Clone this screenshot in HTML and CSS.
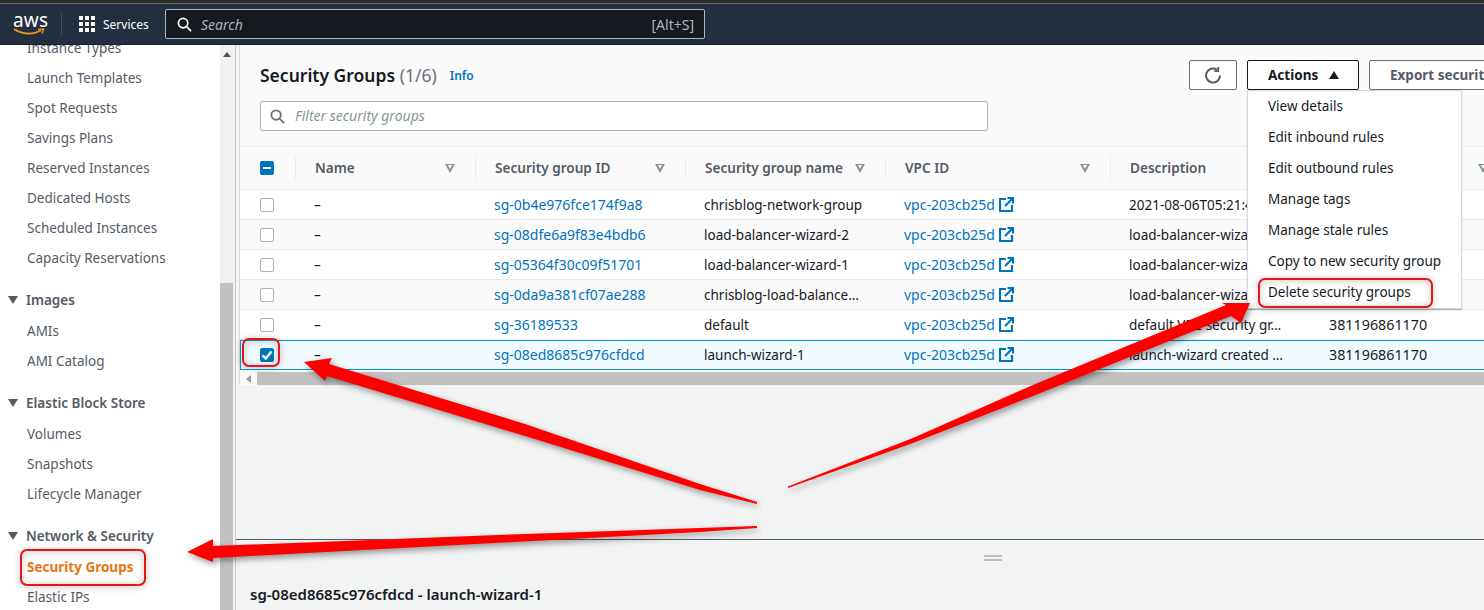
FILE: index.html
```html
<!DOCTYPE html>
<html lang="en">
<head>
  <meta charset="UTF-8" />
  <title>Security Groups</title>
  <link rel="stylesheet" href="styles.css">
</head>
<body>
  <div class="top-strip"></div>
  <header class="navbar">
    <div class="logo">
      <span class="logo-text">aws</span>
      <svg class="logo-smile" width="32" height="8" viewBox="0 0 32 8"><path d="M1 1C9 6.500 20 7 28 2.500" fill="none" stroke="#ec9215" stroke-width="1.800"/><path d="M25 1.500L30.500 1L29 5.500" fill="none" stroke="#ec9215" stroke-width="1.500"/></svg>
    </div>
    <div class="nav-sep"></div>
    <svg class="grid-icon" width="16" height="16" viewBox="0 0 16 16" fill="#fff">
      <rect x="0" y="0" width="4" height="4"/><rect x="6" y="0" width="4" height="4"/><rect x="12" y="0" width="4" height="4"/>
      <rect x="0" y="6" width="4" height="4"/><rect x="6" y="6" width="4" height="4"/><rect x="12" y="6" width="4" height="4"/>
      <rect x="0" y="12" width="4" height="4"/><rect x="6" y="12" width="4" height="4"/><rect x="12" y="12" width="4" height="4"/>
    </svg>
    <span class="services">Services</span>
    <div class="nav-search">
      <svg width="15" height="15" viewBox="0 0 16 16" fill="none" stroke="#fff" stroke-width="1.800"><circle cx="6.500" cy="6.500" r="5"/><path d="M10.500 10.500L15 15"/></svg>
      <span class="nav-search-text">Search</span>
      <span class="nav-search-key">[Alt+S]</span>
    </div>
  </header>

  <div class="layout">
    <aside class="sidebar">
      <ul class="side-list">
        <li>Instance Types</li>
        <li>Launch Templates</li>
        <li>Spot Requests</li>
        <li>Savings Plans</li>
        <li>Reserved Instances</li>
        <li>Dedicated Hosts</li>
        <li>Scheduled Instances</li>
        <li>Capacity Reservations</li>
      </ul>
      <h3 class="side-head">Images</h3>
      <ul class="side-list">
        <li>AMIs</li>
        <li>AMI Catalog</li>
      </ul>
      <h3 class="side-head">Elastic Block Store</h3>
      <ul class="side-list">
        <li>Volumes</li>
        <li>Snapshots</li>
        <li>Lifecycle Manager</li>
      </ul>
      <h3 class="side-head">Network &amp; Security</h3>
      <ul class="side-list">
        <li class="active">Security Groups</li>
        <li>Elastic IPs</li>
      </ul>
    </aside>
    <div class="side-scroll">
      <div class="scroll-up"></div>
      <div class="scroll-thumb"></div>
    </div>

    <main class="content">
      <div class="upper">
        <section class="panel">
          <div class="panel-head">
            <h1 class="panel-title">Security Groups <span class="count">(1/6)</span></h1>
            <a class="info">Info</a>
            <div class="panel-actions">
              <button class="btn btn-icon">
                <svg width="18" height="18" viewBox="0 0 18 18" fill="none" stroke="#545b64" stroke-width="2"><path d="M16 9.500A7 7 0 1 1 13 3.800"/><path d="M14.300 1v4.200H10.200" stroke-width="1.800"/></svg>
              </button>
              <button class="btn btn-dark">Actions <span class="caret"></span></button>
              <button class="btn btn-export">Export security groups to CSV</button>
            </div>
          </div>
          <div class="filter">
            <svg width="15" height="15" viewBox="0 0 16 16" fill="none" stroke="#687078" stroke-width="2"><circle cx="6.500" cy="6.500" r="5"/><path d="M10.500 10.500L15 15"/></svg>
            <span class="filter-text">Filter security groups</span>
          </div>
          <table class="sg-table">
            <colgroup>
              <col class="c-check"><col class="c-name"><col class="c-id"><col class="c-group"><col class="c-vpc"><col class="c-desc"><col class="c-owner">
            </colgroup>
            <thead>
              <tr>
                <th><span class="cbox cbox-mixed"></span></th>
                <th><div class="th-in">Name<i class="sort"></i></div></th>
                <th><div class="th-in">Security group ID<i class="sort"></i></div></th>
                <th><div class="th-in">Security group name<i class="sort"></i></div></th>
                <th><div class="th-in">VPC ID<i class="sort"></i></div></th>
                <th><div class="th-in">Description<i class="sort"></i></div></th>
                <th><div class="th-in">Owner<i class="sort"></i></div></th>
              </tr>
            </thead>
            <tbody>
              <tr>
                <td><span class="cbox"></span></td><td>–</td><td class="link">sg-0b4e976fce174f9a8</td><td>chrisblog-network-group</td>
                <td class="link">vpc-203cb25d <svg class="ext" width="15" height="15" viewBox="0 0 15 15" fill="none" stroke="#0073bb" stroke-width="2.200"><path d="M7 2H1v12h12V8"/><path d="M6 9l7-7M8.500 1H14v5.500"/></svg></td>
                <td>2021-08-06T05:21:46.021Z</td><td class="num">381196861170</td>
              </tr>
              <tr>
                <td><span class="cbox"></span></td><td>–</td><td class="link">sg-08dfe6a9f83e4bdb6</td><td>load-balancer-wizard-2</td>
                <td class="link">vpc-203cb25d <svg class="ext" width="15" height="15" viewBox="0 0 15 15" fill="none" stroke="#0073bb" stroke-width="2.200"><path d="M7 2H1v12h12V8"/><path d="M6 9l7-7M8.500 1H14v5.500"/></svg></td>
                <td>load-balancer-wizard-2 c…</td><td class="num">381196861170</td>
              </tr>
              <tr>
                <td><span class="cbox"></span></td><td>–</td><td class="link">sg-05364f30c09f51701</td><td>load-balancer-wizard-1</td>
                <td class="link">vpc-203cb25d <svg class="ext" width="15" height="15" viewBox="0 0 15 15" fill="none" stroke="#0073bb" stroke-width="2.200"><path d="M7 2H1v12h12V8"/><path d="M6 9l7-7M8.500 1H14v5.500"/></svg></td>
                <td>load-balancer-wizard-1 c…</td><td class="num">381196861170</td>
              </tr>
              <tr>
                <td><span class="cbox"></span></td><td>–</td><td class="link">sg-0da9a381cf07ae288</td><td>chrisblog-load-balance…</td>
                <td class="link">vpc-203cb25d <svg class="ext" width="15" height="15" viewBox="0 0 15 15" fill="none" stroke="#0073bb" stroke-width="2.200"><path d="M7 2H1v12h12V8"/><path d="M6 9l7-7M8.500 1H14v5.500"/></svg></td>
                <td>load-balancer-wizard-1 c…</td><td class="num">381196861170</td>
              </tr>
              <tr>
                <td><span class="cbox"></span></td><td>–</td><td class="link">sg-36189533</td><td>default</td>
                <td class="link">vpc-203cb25d <svg class="ext" width="15" height="15" viewBox="0 0 15 15" fill="none" stroke="#0073bb" stroke-width="2.200"><path d="M7 2H1v12h12V8"/><path d="M6 9l7-7M8.500 1H14v5.500"/></svg></td>
                <td>default VPC security gr…</td><td class="num">381196861170</td>
              </tr>
              <tr class="selected">
                <td><span class="cbox cbox-on"><svg width="14" height="14" viewBox="0 0 14 14" fill="none" stroke="#fff" stroke-width="2.400"><path d="M2.500 7.500L5.800 10.500L11.500 3.500"/></svg></span></td><td>–</td><td class="link">sg-08ed8685c976cfdcd</td><td>launch-wizard-1</td>
                <td class="link">vpc-203cb25d <svg class="ext" width="15" height="15" viewBox="0 0 15 15" fill="none" stroke="#0073bb" stroke-width="2.200"><path d="M7 2H1v12h12V8"/><path d="M6 9l7-7M8.500 1H14v5.500"/></svg></td>
                <td>launch-wizard created …</td><td class="num">381196861170</td>
              </tr>
            </tbody>
          </table>
          <div class="table-scroll">
            <div class="scroll-left"></div>
            <div class="scroll-bar"></div>
          </div>
        </section>
      </div>
      <div class="gap-area"></div>
      <section class="split">
        <div class="split-handle"></div>
        <h2 class="split-title">sg-08ed8685c976cfdcd - launch-wizard-1</h2>
      </section>
    </main>
  </div>

  <ul class="menu">
    <li>View details</li>
    <li>Edit inbound rules</li>
    <li>Edit outbound rules</li>
    <li>Manage tags</li>
    <li>Manage stale rules</li>
    <li>Copy to new security group</li>
    <li>Delete security groups</li>
  </ul>

  <!-- annotations drawn over the screenshot -->
  <svg class="marks" width="1484" height="610" viewBox="0 0 1484 610">
    <g class="arrows">
      <polygon points="304,362 332,358 329,364 525,424 700,484 757,502 757,504 700,490 525,436 327,376 325,381"/>
      <polygon points="1250,303 1222,303 1226,305 1033,385 913,438 788,486.500 788,488 913,443 1033,396 1231,316 1241,323"/>
      <polygon points="187,552 213,539 213,546 485,535.500 700,528 757,526 757,528 700,532 485,543.500 213,558 213,562"/>
    </g>
    <g class="boxes">
      <rect x="1259" y="279" width="173" height="28" rx="6"/>
      <rect x="243" y="339" width="36" height="27" rx="6"/>
      <rect x="21" y="550" width="124" height="35" rx="6"/>
    </g>
  </svg>
</body>
</html>
```

FILE: styles.css
```css
* {
  box-sizing: border-box;
}
html, body {
  margin: 0;
  height: 610px;
  overflow: hidden;
}
body {
  font-family: "Noto Sans", sans-serif;
  font-size: 13.500px;
  color: #16191f;
  background: #fff;
  position: relative;
}
ul {
  list-style: none;
  margin: 0;
  padding: 0;
}

.top-strip {
  height: 4px;
  background: #2e2e2e;
  border-bottom: 1px solid #666;
}
.navbar {
  height: 41px;
  background: #232f3e;
  border-bottom: 1px solid #161e2d;
  display: flex;
  align-items: center;
  padding-left: 13px;
  color: #fff;
}
.logo {
  width: 32px;
  height: 30px;
  position: relative;
  flex: none;
}
.logo-text {
  display: block;
  font-size: 19px;
  line-height: 22px;
  letter-spacing: 0.2px;
  text-align: center;
}
.logo-smile {
  position: absolute;
  left: 0;
  top: 19px;
}
.nav-sep {
  width: 1px;
  height: 22px;
  background: #414d5c;
  margin: 0 17px 0 16px;
  flex: none;
}
.grid-icon {
  flex: none;
}
.services {
  font-size: 12px;
  width: 45px;
  white-space: nowrap;
  margin: 0 17px 0 8px;
  flex: none;
}
.nav-search {
  width: 540px;
  height: 30px;
  background: #16191f;
  border: 1px solid #aab7b8;
  border-radius: 2px;
  display: flex;
  align-items: center;
  padding: 0 10px 0 11px;
  color: #aab7b8;
}
.nav-search-text {
  font-style: italic;
  font-size: 14px;
  margin-left: 9px;
  flex: 1;
}
.nav-search-key {
  font-size: 14px;
}

.layout {
  display: flex;
  height: 565px;
}
.sidebar {
  width: 220px;
  overflow: hidden;
  flex: none;
  color: #545b64;
}
.sidebar > .side-list:first-child {
  margin-top: -12px;
}
.side-list li {
  height: 30px;
  line-height: 30px;
  padding-left: 27px;
  white-space: nowrap;
}
.side-list li.active {
  color: #ec7211;
  font-weight: 700;
}
.side-head {
  margin: 12px 0 0;
  height: 31px;
  line-height: 30px;
  font-size: 13.500px;
  font-weight: 600;
  color: #545b64;
  padding-left: 26px;
  position: relative;
}
.side-head::before {
  content: "";
  position: absolute;
  left: 8px;
  top: 11px;
  border-left: 5.500px solid transparent;
  border-right: 5.500px solid transparent;
  border-top: 8px solid #545b64;
}
.side-scroll {
  width: 15px;
  flex: none;
  background: #f1f1f1;
  display: flex;
  flex-direction: column;
}
.scroll-up {
  height: 238px;
  position: relative;
}
.scroll-up::before {
  content: "";
  position: absolute;
  left: 3px;
  top: 7px;
  border-left: 4px solid transparent;
  border-right: 4px solid transparent;
  border-bottom: 5px solid #505050;
}
.scroll-thumb {
  flex: 1;
  width: 13px;
  background: #c1c1c1;
}

.content {
  flex: 1;
  min-width: 0;
  background: #f2f3f3;
  border-left: 1px solid #c3c8c8;
  display: flex;
  flex-direction: column;
  overflow: hidden;
}
.upper {
  padding-left: 3px;
}
.panel {
  background: #fafafa;
  border-left: 1px solid #d5dbdb;
  overflow: hidden;
}
.panel-head {
  height: 56px;
  display: flex;
  align-items: center;
  padding: 15px 0 11px 20px;
}
.panel-title {
  font-size: 17.500px;
  font-weight: 600;
  margin: 0;
  white-space: nowrap;
}
.count {
  font-weight: 400;
  color: #687078;
}
.info {
  color: #0073bb;
  font-size: 12px;
  font-weight: 600;
  margin-left: 13px;
}
.panel-actions {
  margin-left: auto;
  display: flex;
  gap: 10px;
  width: 295px;
  flex: none;
}
.btn {
  height: 30px;
  background: #fff;
  border: 1px solid #687078;
  border-radius: 2px;
  font-family: inherit;
  font-size: 13.500px;
  font-weight: 700;
  color: #545b64;
  white-space: nowrap;
  padding: 0 20px;
  flex: none;
}
.btn-icon {
  width: 48px;
  padding: 0;
  display: flex;
  align-items: center;
  justify-content: center;
}
.btn-dark {
  width: 112px;
  color: #16191f;
  border-color: #16191f;
  text-align: left;
}
.caret {
  display: inline-block;
  margin-left: 7px;
  border-left: 5.500px solid transparent;
  border-right: 5.500px solid transparent;
  border-bottom: 8px solid #16191f;
  vertical-align: 1px;
}
.btn-export {
  text-align: left;
}
.filter {
  width: 728px;
  height: 30px;
  margin: 0 0 15px 20px;
  background: #fff;
  border: 1px solid #aab7b8;
  border-radius: 2px;
  display: flex;
  align-items: center;
  padding-left: 9px;
  gap: 10px;
  color: #879596;
  font-style: italic;
  font-size: 14px;
}
.filter-text {
  margin-top: -1px;
}

.sg-table {
  border-collapse: separate;
  border-spacing: 0;
  table-layout: fixed;
  width: 1268px;
  font-size: 13.500px;
  border-top: 1px solid #eaeded;
}
.c-check { width: 55px; }
.c-name { width: 180px; }
.c-id { width: 210px; }
.c-group { width: 200px; }
.c-vpc { width: 225px; }
.c-desc { width: 200px; }
.c-owner { width: 198px; }
.sg-table th {
  height: 43px;
  padding: 0;
  text-align: left;
  font-size: 13.600px;
  font-weight: 600;
  color: #545b64;
  background: #fafafa;
  border-bottom: 1px solid #eaeded;
}
.sg-table th:first-child,
.sg-table td:first-child {
  padding-left: 20px;
}
.th-in {
  height: 22px;
  line-height: 22px;
  border-left: 1px solid #eaeded;
  padding: 0 20px 0 19px;
  display: flex;
  justify-content: space-between;
  align-items: center;
}
.sort {
  position: relative;
  width: 0;
  height: 0;
  border-left: 5.500px solid transparent;
  border-right: 5.500px solid transparent;
  border-top: 9px solid #879596;
}
.sort::after {
  content: "";
  position: absolute;
  left: -2.500px;
  top: -7.500px;
  border-left: 2.500px solid transparent;
  border-right: 2.500px solid transparent;
  border-top: 4px solid #fafafa;
}
.sg-table td {
  height: 30px;
  padding: 0 0 0 19px;
  background: #fff;
  border-bottom: 1px solid #eaeded;
  white-space: nowrap;
  overflow: hidden;
}
.sg-table tbody tr:nth-child(even) td {
  background: #fafafa;
}
.sg-table td.link {
  color: #0073bb;
  font-size: 14px;
}
.sg-table td.num {
  font-size: 14.300px;
}
.sg-table tbody tr.selected td {
  background: #f1faff;
  border-top: 1px solid #00a1c9;
  border-bottom: 1px solid #00a1c9;
  padding-bottom: 1px;
}
.sg-table tbody tr.selected td:first-child {
  border-left: 1px solid #00a1c9;
  padding-left: 19px;
}
.ext {
  vertical-align: -2px;
}
.cbox {
  display: block;
  width: 14px;
  height: 14px;
  background: #fff;
  border: 1px solid #aab7b8;
  border-radius: 2px;
}
.cbox-mixed,
.cbox-on {
  background: #0073bb;
  border-color: #0073bb;
}
.cbox-on {
  display: flex;
  align-items: center;
  justify-content: center;
}
.cbox-on svg {
  flex: none;
}
.cbox-mixed {
  position: relative;
}
.cbox-mixed::after {
  content: "";
  position: absolute;
  left: 2px;
  right: 2px;
  top: 5px;
  height: 2px;
  background: #fff;
}
.table-scroll {
  height: 13px;
  margin-top: 2px;
  display: flex;
}
.scroll-left {
  width: 17px;
  position: relative;
}
.scroll-left::before {
  content: "";
  position: absolute;
  left: 6px;
  top: 3px;
  border-top: 4px solid transparent;
  border-bottom: 4px solid transparent;
  border-right: 5px solid #9a9a9a;
}
.scroll-bar {
  flex: 1;
  background: #c1c1c1;
}
.gap-area {
  flex: 1;
}
.split {
  height: 71px;
  background: #f2f3f3;
  border-top: 1px solid #545b64;
  position: relative;
  padding: 44px 0 0 14px;
}
.split-handle {
  position: absolute;
  left: 748px;
  top: 15px;
  width: 18px;
  height: 6px;
  border-top: 2px solid #bcbcbc;
  border-bottom: 2px solid #bcbcbc;
}
.split-title {
  margin: 0;
  font-size: 15px;
  font-weight: 600;
  line-height: 20px;
}

/* dropdown under Actions */
.menu {
  position: absolute;
  left: 1247px;
  top: 90px;
  width: 215px;
  height: 219px;
  background: #fff;
  border: 1px solid #d5dbdb;
  box-shadow: 0 1px 1px rgba(0, 28, 36, 0.3);
  font-size: 13.500px;
  color: #16191f;
}
.menu li {
  height: 31px;
  line-height: 31px;
  padding-left: 20px;
}

/* red annotations */
.marks {
  position: absolute;
  left: 0;
  top: 0;
  pointer-events: none;
}
.arrows polygon {
  fill: #ff0000;
  filter: drop-shadow(2px 3px 3px rgba(0, 0, 0, 0.4));
}
.boxes rect {
  fill: none;
  stroke: #e8141c;
  stroke-width: 2;
  filter: drop-shadow(0 1px 3px rgba(0, 0, 0, 0.4));
}
```
